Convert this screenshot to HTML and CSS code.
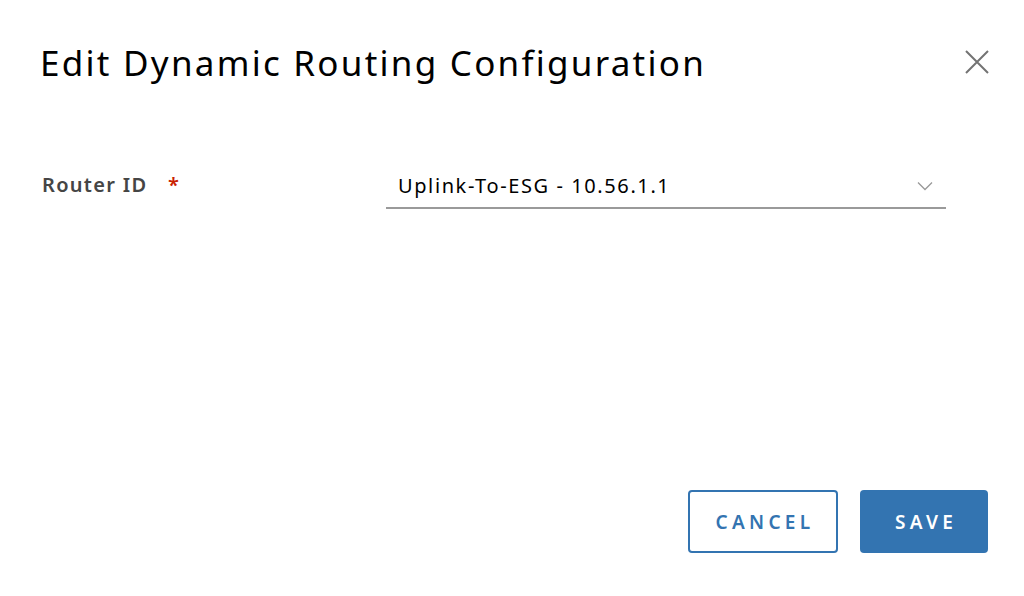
FILE: index.html
```html
<!DOCTYPE html>
<html>
<head>
    <title>Edit Dynamic Routing Configuration</title>
    <link rel="stylesheet" href="styles.css">
</head>
<body>
    <div class="modal">
        <div class="modal-header">
            <h1 class="modal-title">Edit Dynamic Routing Configuration</h1>
            <button class="close" aria-label="Close">
                <svg width="24" height="24" viewBox="0 0 24 24">
                    <path d="M1 1 L23 23 M23 1 L1 23" stroke="#737373" stroke-width="2" fill="none"/>
                </svg>
            </button>
        </div>

        <div class="modal-body">
            <div class="form-row">
                <label class="form-label">Router ID <span class="required">*</span></label>
                <div class="select">
                    <span class="select-value">Uplink-To-ESG - 10.56.1.1</span>
                    <svg class="chevron" width="16" height="10" viewBox="0 0 16 10">
                        <path d="M1 1.5 L8 8.5 L15 1.5" stroke="#999" stroke-width="1.3" fill="none"/>
                    </svg>
                </div>
            </div>
        </div>

        <div class="modal-footer">
            <button class="btn btn-outline">Cancel</button>
            <button class="btn btn-primary">Save</button>
        </div>
    </div>
</body>
</html>
```

FILE: styles.css
```css
body {
    margin: 0;
    background: #fff;
    font-family: "Noto Sans", Arial, sans-serif;
}
.modal {
    padding: 0 35px 0 40px;
}
.modal-header {
    height: 124px;
    display: flex;
    align-items: center;
    justify-content: space-between;
}
.modal-title {
    margin: 0;
    font-size: 35px;
    font-weight: 400;
    color: #000;
    letter-spacing: 2.25px;
}
.close {
    background: none;
    border: none;
    padding: 0;
    width: 24px;
    height: 24px;
    cursor: pointer;
}
.modal-body {
    height: 366px;
    box-sizing: border-box;
    padding-top: 40px;
}
.form-row {
    display: flex;
    align-items: flex-start;
}
.form-label {
    width: 344px;
    box-sizing: border-box;
    padding-left: 2px;
    padding-top: 7px;
    font-size: 20px;
    font-weight: 600;
    letter-spacing: 1.3px;
    color: #454545;
}
.required {
    color: #c92100;
    margin-left: 14px;
}
.select {
    width: 560px;
    height: 45px;
    box-sizing: border-box;
    border-bottom: 2px solid #9a9a9a;
    display: flex;
    align-items: center;
    justify-content: space-between;
    padding: 0 13px 0 12px;
    margin-left: 2px;
}
.select-value {
    font-size: 20px;
    letter-spacing: 1.6px;
    color: #000;
}
.modal-footer {
    display: flex;
    justify-content: flex-end;
    gap: 22px;
    padding-right: 1px;
}
.btn {
    height: 63px;
    border-radius: 4px;
    font-family: inherit;
    font-size: 19px;
    font-weight: 600;
    letter-spacing: 4.3px;
    text-indent: 4px;
    text-transform: uppercase;
    cursor: pointer;
}
.btn-outline {
    width: 150px;
    background: #fff;
    color: #3374b1;
    border: 2px solid #3374b1;
}
.btn-primary {
    width: 128px;
    background: #3374b1;
    color: #fff;
    border: none;
}
```
